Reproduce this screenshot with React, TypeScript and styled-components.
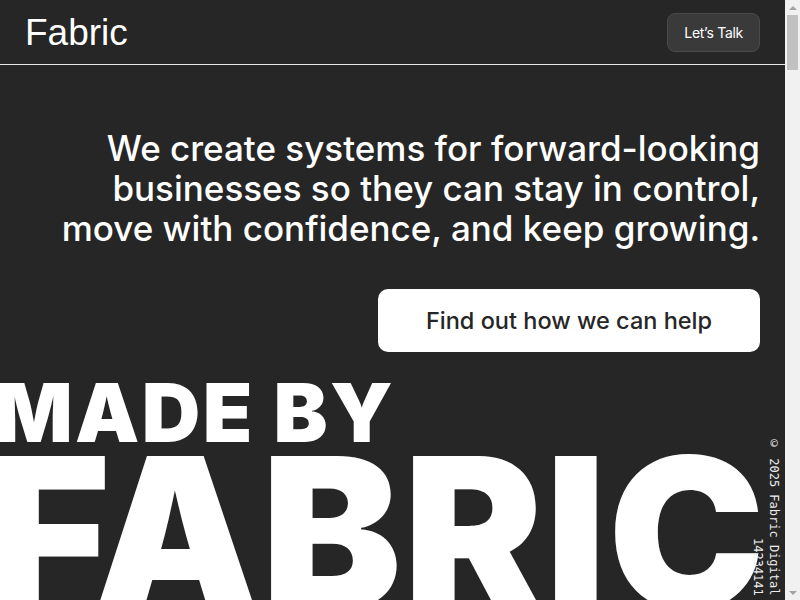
import styled, { createGlobalStyle } from 'styled-components'

const GlobalStyle = createGlobalStyle`
  html,
  body {
    margin: 0;
    padding: 0;
    height: 100%;
    background: #262626;
    overflow: hidden;
  }

  body {
    font-family: Inter, 'Liberation Sans', sans-serif;
    color: #fff;
  }
`

const Shell = styled.div`
  display: flex;
  height: 100vh;
`

const Viewport = styled.main`
  flex: 1;
  min-width: 0;
  overflow-x: hidden;
  overflow-y: auto;
  scrollbar-width: none;
`

const Track = styled.div`
  display: flex;
  flex-direction: column;
  width: 15px;
  background: #f1f1f1;
`

const Arrow = styled.div<{ $down?: boolean }>`
  display: flex;
  align-items: center;
  justify-content: center;
  height: 15px;

  &::before {
    content: '';
    border-left: 4px solid transparent;
    border-right: 4px solid transparent;
    ${(p) => (p.$down ? 'border-top' : 'border-bottom')}: 4px solid #a3a3a3;
  }
`

const Thumb = styled.div`
  height: 55px;
  margin: 0 2px;
  background: #c1c1c1;
`

const TrackRest = styled.div`
  flex: 1;
`

const Page = styled.div`
  min-height: 6200px;
`

const Header = styled.header`
  display: flex;
  align-items: center;
  justify-content: space-between;
  height: 64px;
  padding: 0 25px;
  border-bottom: 1px solid #e8e8e8;
`

const Logo = styled.a`
  font-family: 'Liberation Sans', Arial, sans-serif;
  font-size: 37px;
  line-height: 1;
  color: #fff;
  text-decoration: none;
`

const TalkButton = styled.button`
  height: 39px;
  padding: 0 16px;
  border: 1px solid #4a4a4a;
  border-radius: 8px;
  background: #3a3a3a;
  color: #fff;
  font-family: Inter, sans-serif;
  font-size: 14px;
  letter-spacing: -0.02em;
  cursor: pointer;
`

const Hero = styled.section`
  display: flex;
  flex-direction: column;
  align-items: flex-end;
  gap: 41px;
  padding: 63px 25px 0;
`

const Headline = styled.h1`
  margin: 0;
  font-size: 35px;
  font-weight: 500;
  line-height: 40px;
  text-align: right;
`

const HelpButton = styled.button`
  width: 382px;
  height: 63px;
  border: none;
  border-radius: 10px;
  background: #fff;
  color: #262626;
  font-family: Inter, sans-serif;
  font-size: 23.5px;
  font-weight: 500;
  cursor: pointer;
`

const Signature = styled.section`
  position: relative;
  margin-top: 21px;
`

const BigWord = styled.div<{ $size: number; $pull?: number; $track: number }>`
  margin-top: ${(p) => -(p.$pull ?? 0)}px;
  margin-left: -0.06em;
  font-family: Inter, sans-serif;
  font-size: ${(p) => p.$size}px;
  font-weight: 900;
  line-height: 1;
  letter-spacing: ${(p) => p.$track}em;
  text-transform: uppercase;
  white-space: nowrap;
`

const Copyright = styled.small`
  position: absolute;
  top: 64px;
  right: 3px;
  writing-mode: vertical-rl;
  text-align: end;
  font-family: 'DejaVu Sans Mono', monospace;
  font-size: 12px;
  line-height: 16px;
  color: #eee;
`

export default function App() {
  return (
    <Shell>
      <GlobalStyle />
      <Viewport>
        <Page>
          <Header>
            <Logo href="#">Fabric</Logo>
            <TalkButton>Let’s Talk</TalkButton>
          </Header>

          <Hero>
            <Headline>
              We create systems for forward-looking
              <br />
              businesses so they can stay in control,
              <br />
              move with confidence, and keep growing.
            </Headline>
            <HelpButton>Find out how we can help</HelpButton>
          </Hero>

          <Signature>
            <BigWord $size={81} $track={0.03}>
              Made by
            </BigWord>
            <BigWord $size={210} $pull={26} $track={0.008}>
              Fabric
            </BigWord>
            <Copyright>
              © 2025 Fabric Digital
              <br />
              14234141
            </Copyright>
          </Signature>
        </Page>
      </Viewport>
      <Track aria-hidden>
        <Arrow />
        <Thumb />
        <TrackRest />
        <Arrow $down />
      </Track>
    </Shell>
  )
}
